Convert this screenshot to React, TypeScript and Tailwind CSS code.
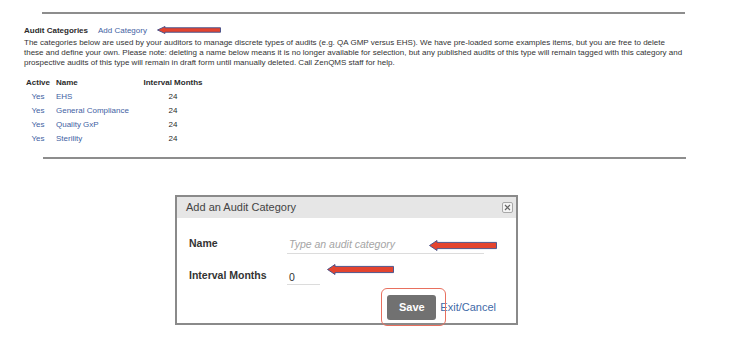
import React from 'react';

const categories = [
  { name: 'EHS', months: 24 },
  { name: 'General Compliance', months: 24 },
  { name: 'Quality GxP', months: 24 },
  { name: 'Sterility', months: 24 },
];

// Red annotation arrow pointing left
const Arrow: React.FC<{ className?: string; w: number; h: number }> = ({ className = '', w, h }) => {
  const head = 8;
  const shaftTop = h * 0.22;
  const shaftBottom = h * 0.78;
  return (
    <svg className={className} width={w} height={h} viewBox={`0 0 ${w} ${h}`}>
      <polygon
        points={`0.5,${h / 2} ${head},0.5 ${head},${shaftTop} ${w - 0.5},${shaftTop} ${w - 0.5},${shaftBottom} ${head},${shaftBottom} ${head},${h - 0.5}`}
        fill="#e4442f"
        stroke="#3d4f8c"
        strokeWidth="0.9"
        strokeLinejoin="round"
      />
    </svg>
  );
};

export default function App() {
  return (
    <div className="relative w-[730px] h-[354px] bg-white font-['Liberation_Sans',Arial,sans-serif] text-[#2b2b2b]">
      {/* top rule */}
      <div className="pt-[12px] pl-[42px] pr-[45px]">
        <div className="h-[2px] bg-[#8d8d8d]" />
      </div>

      {/* Audit categories section */}
      <div className="pl-[24px] pr-[8px] pt-[12px]">
        <div className="flex items-center gap-[10px] text-[8px] leading-[10px]">
          <span className="font-bold">Audit Categories</span>
          <span className="text-[#3f62a3]">Add Category</span>
        </div>
        <p className="mt-[2px] text-[8px] leading-[10px] text-[#333]">
          The categories below are used by your auditors to manage discrete types of audits (e.g. QA GMP versus EHS). We have pre-loaded some examples items, but you are free to delete
          <br />
          these and define your own. Please note: deleting a name below means it is no longer available for selection, but any published audits of this type will remain tagged with this category and
          <br />
          prospective audits of this type will remain in draft form until manually deleted. Call ZenQMS staff for help.
        </p>

        <div className="mt-[8px] text-[8px]">
          <div className="grid grid-cols-[28px_88px_66px] h-[14px] items-center font-bold">
            <span className="text-center">Active</span>
            <span className="pl-[4px]">Name</span>
            <span className="text-center">Interval Months</span>
          </div>
          {categories.map((c) => (
            <div key={c.name} className="grid grid-cols-[28px_88px_66px] h-[14px] items-center">
              <span className="text-center text-[#3f62a3]">Yes</span>
              <span className="pl-[4px] text-[#3f62a3]">{c.name}</span>
              <span className="text-center">{c.months}</span>
            </div>
          ))}
        </div>
      </div>

      {/* bottom rule */}
      <div className="pt-[11px] pl-[43px] pr-[44px]">
        <div className="h-[2px] bg-[#8d8d8d]" />
      </div>

      {/* Dialog */}
      <div className="ml-[175px] mt-[36px] w-[343px] h-[130px] border-2 border-[#8a8a8a] bg-white">
        <div className="flex items-center justify-between h-[21px] bg-[#e6e6e6] pl-[9px] pr-[3px]">
          <span className="text-[11px] text-[#444]">Add an Audit Category</span>
          <span className="flex items-center justify-center w-[11px] h-[11px] border border-[#a8a8a8] rounded-[2px] bg-[#f4f4f4]">
            <svg width="7" height="7" viewBox="0 0 7 7">
              <path d="M1 1L6 6M6 1L1 6" stroke="#666" strokeWidth="1.2" />
            </svg>
          </span>
        </div>

        <div className="pl-[12px] pr-[20px] pt-[18px]">
          <div className="flex items-start">
            <span className="w-[98px] text-[10.5px] font-bold text-[#333] leading-[14px]">Name</span>
            <div className="w-[197px] border-b border-[#dcdcdc] h-[18px]">
              <span className="block pl-[2px] pt-[1px] text-[10.5px] italic text-[#a5a5a5] leading-[14px]">Type an audit category</span>
            </div>
          </div>
          <div className="flex items-start mt-[13px]">
            <span className="w-[98px] text-[10.5px] font-bold text-[#333] leading-[14px] pt-[1px]">Interval Months</span>
            <div className="w-[33px] border-b border-[#dcdcdc] h-[18px]">
              <span className="block pl-[2px] pt-[3px] text-[10.5px] text-[#333] leading-[14px]">0</span>
            </div>
          </div>
          <div className="flex items-center justify-end gap-[4px] mt-[10px]">
            <button className="w-[49px] h-[25px] rounded-[3px] bg-[#717171] text-white text-[11px] font-bold">
              Save
            </button>
            <span className="text-[11px] text-[#3f6aa8]">Exit/Cancel</span>
          </div>
        </div>
      </div>

      {/* annotations */}
      <Arrow className="absolute left-[157px] top-[26px]" w={64} h={8} />
      <Arrow className="absolute left-[429px] top-[240px]" w={68} h={11} />
      <Arrow className="absolute left-[327px] top-[264px]" w={67} h={11} />
      <div className="absolute left-[381px] top-[288px] w-[65px] h-[38px] rounded-[6px] border border-[#e8705f]" />
    </div>
  );
}
